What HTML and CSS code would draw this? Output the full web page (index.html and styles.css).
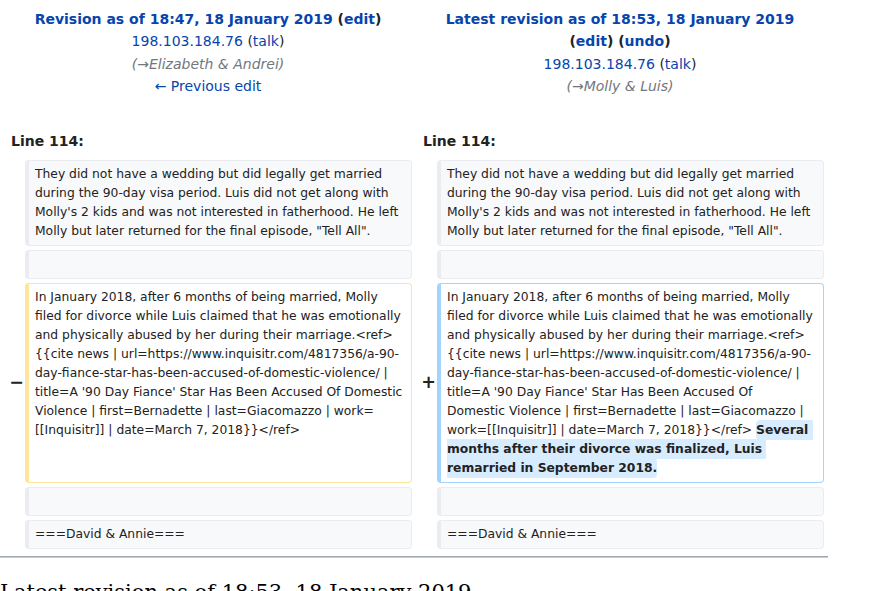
FILE: index.html
```html
<!DOCTYPE html>
<html lang="en">
<head>
<meta charset="utf-8">
<title>Diff</title>
<link rel="stylesheet" href="styles.css">
</head>
<body>
<table class="diff">
  <colgroup>
    <col class="col-marker">
    <col class="col-content">
    <col class="col-marker">
    <col class="col-content">
  </colgroup>
  <tr>
    <td colspan="2" class="diff-title">
      <div><strong><a href="#">Revision as of 18:47, 18 January 2019</a> <span class="paren">(<a href="#">edit</a>)</span></strong></div>
      <div><a href="#">198.103.184.76</a> <span class="paren">(<a href="#">talk</a>)</span></div>
      <div class="comment">(<span class="arrow">→</span>Elizabeth &amp; Andrei)</div>
      <div><a href="#">← Previous edit</a></div>
    </td>
    <td colspan="2" class="diff-title">
      <div><strong><a href="#">Latest revision as of 18:53, 18 January 2019</a> <span class="paren">(<a href="#">edit</a>)</span> <span class="paren">(<a href="#">undo</a>)</span></strong></div>
      <div><a href="#">198.103.184.76</a> <span class="paren">(<a href="#">talk</a>)</span></div>
      <div class="comment">(<span class="arrow">→</span>Molly &amp; Luis)</div>
      <div>&nbsp;</div>
    </td>
  </tr>
  <tr>
    <td colspan="2" class="diff-lineno">Line 114:</td>
    <td colspan="2" class="diff-lineno">Line 114:</td>
  </tr>
  <tr>
    <td class="diff-marker"></td>
    <td class="diff-line context">They did not have a wedding but did legally get married during the 90-day visa period. Luis did not get along with Molly's 2 kids and was not interested in fatherhood. He left Molly but later returned for the final episode, "Tell All".</td>
    <td class="diff-marker"></td>
    <td class="diff-line context">They did not have a wedding but did legally get married during the 90-day visa period. Luis did not get along with Molly's 2 kids and was not interested in fatherhood. He left Molly but later returned for the final episode, "Tell All".</td>
  </tr>
  <tr>
    <td class="diff-marker"></td>
    <td class="diff-line context"><br></td>
    <td class="diff-marker"></td>
    <td class="diff-line context"><br></td>
  </tr>
  <tr>
    <td class="diff-marker"><span class="mark">−</span></td>
    <td class="diff-line deleted">In January 2018, after 6 months of being married, Molly filed for divorce while Luis claimed that he was emotionally and physically abused by her during their marriage.&lt;ref&gt;<wbr>{{cite news | url=https://www.inquisitr.com/4817356/a-90-day-fiance-star-has-been-accused-of-domestic-violence/ | title=A '90 Day Fiance' Star Has Been Accused Of Domestic Violence | first=Bernadette | last=Giacomazzo | work=<wbr>[[Inquisitr]] | date=March 7, 2018}}&lt;/ref&gt;</td>
    <td class="diff-marker"><span class="mark">+</span></td>
    <td class="diff-line added">In January 2018, after 6 months of being married, Molly filed for divorce while Luis claimed that he was emotionally and physically abused by her during their marriage.&lt;ref&gt;<wbr>{{cite news | url=https://www.inquisitr.com/4817356/a-90-day-fiance-star-has-been-accused-of-domestic-violence/ | title=A '90 Day Fiance' Star Has Been Accused Of
Domestic Violence | first=Bernadette | last=Giacomazzo | work=[[Inquisitr]] | date=March 7, 2018}}&lt;/ref&gt; <ins class="diffchange">Several months after their divorce was finalized, Luis remarried in September 2018.</ins></td>
  </tr>
  <tr>
    <td class="diff-marker"></td>
    <td class="diff-line context"><br></td>
    <td class="diff-marker"></td>
    <td class="diff-line context"><br></td>
  </tr>
  <tr>
    <td class="diff-marker"></td>
    <td class="diff-line context">===David &amp; Annie===</td>
    <td class="diff-marker"></td>
    <td class="diff-line context">===David &amp; Annie===</td>
  </tr>
</table>
<hr class="diff-hr">
<h2 class="current-title">Latest revision as of 18:53, 18 January 2019</h2>
</body>
</html>
```

FILE: styles.css
```css
html, body {
  margin: 0;
  padding: 0;
  background: #ffffff;
}

body {
  width: 828px;
  font-family: "DejaVu Sans", sans-serif;
  font-size: 14px;
  color: #222222;
}

a {
  color: #0645ad;
  text-decoration: none;
}

.diff {
  width: 828px;
  table-layout: fixed;
  border-collapse: separate;
  border-spacing: 4px;
}

.col-marker {
  width: 17px;
}

.col-content {
  width: 387px;
}

.diff-title {
  text-align: center;
  vertical-align: top;
  line-height: 22.3px;
  padding: 4px 7px 0;
}

.paren {
  color: #222222;
}

.comment {
  font-style: italic;
  color: #72777d;
}

.diff-lineno {
  font-weight: bold;
  line-height: 22.4px;
  padding: 7px 7px 3px;
}

.diff-marker {
  padding: 0;
  text-align: right;
  vertical-align: middle;
  font-size: 17.5px;
  font-weight: bold;
  line-height: 1.2;
}

.mark {
  margin-right: -3px;
}

.diff-line {
  vertical-align: top;
  font-size: 12.32px;
  line-height: 19px;
  padding: 4px 6px;
  border-style: solid;
  border-width: 1px 1px 1px 4px;
  border-radius: 4px;
  white-space: pre-wrap;
  overflow-wrap: break-word;
}

.context {
  background: #f8f9fa;
  border-color: #eaecf0;
}

.deleted {
  background: #ffffff;
  border-color: #ffe49c;
}

.added {
  background: #ffffff;
  border-color: #a3d3ff;
}

.diffchange {
  text-decoration: none;
  font-weight: bold;
  background: #d8ecff;
  border-radius: 0.33em;
  padding: 0.25em 0;
}

.diff-hr {
  margin: 3px 0 0;
  height: 0;
  border: 0;
  border-top: 1px solid #a2a9b1;
  border-bottom: 1px solid #c8ccd1;
}

.current-title {
  margin: 22px 0 0;
  font-family: "DejaVu Serif", serif;
  font-size: 21px;
  font-weight: normal;
  line-height: 1.2;
  color: #000000;
}
```
